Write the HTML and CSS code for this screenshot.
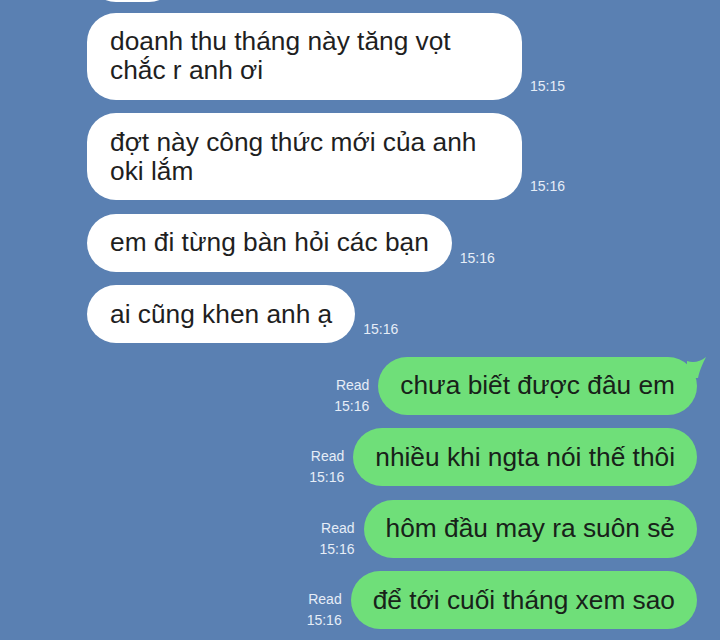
FILE: index.html
```html
<!DOCTYPE html>
<html lang="vi">
<head>
	<meta charset="UTF-8">
	<meta name="viewport" content="width=device-width, initial-scale=1">
	<title>Chat</title>
	<link rel="stylesheet" href="styles.css">
</head>
<body>
<div class="chat">
	<!-- bottom edge of the previous message, scrolled off -->
	<div class="row in prev">
		<div class="bubble stub"></div>
	</div>
	<div class="row in">
		<div class="bubble">doanh thu tháng này tăng vọt chắc r anh ơi</div>
		<div class="time">15:15</div>
	</div>
	<div class="row in">
		<div class="bubble">đợt này công thức mới của anh oki lắm</div>
		<div class="time">15:16</div>
	</div>
	<div class="row in">
		<div class="bubble">em đi từng bàn hỏi các bạn</div>
		<div class="time">15:16</div>
	</div>
	<div class="row in">
		<div class="bubble">ai cũng khen anh ạ</div>
		<div class="time">15:16</div>
	</div>

	<div class="row out">
		<div class="meta">Read<br>15:16</div>
		<div class="bubble first">chưa biết được đâu em
			<svg class="tail" width="20" height="22" viewBox="0 0 20 22"><path d="M0,4 C6,6 13,5 19,0 C16,6 13,12 11,21 L0,21 Z" fill="#6fdf79"/></svg>
		</div>
	</div>
	<div class="row out">
		<div class="meta">Read<br>15:16</div>
		<div class="bubble">nhiều khi ngta nói thế thôi</div>
	</div>
	<div class="row out">
		<div class="meta">Read<br>15:16</div>
		<div class="bubble">hôm đầu may ra suôn sẻ</div>
	</div>
	<div class="row out">
		<div class="meta">Read<br>15:16</div>
		<div class="bubble">để tới cuối tháng xem sao</div>
	</div>
</div>
</body>
</html>
```

FILE: styles.css
```css
html, body {
	margin:0;
	height:100%;
}
body {
	background:#5a80b2;
	font-family:"Liberation Sans", Arial, sans-serif;
	overflow:hidden;
}

.chat {
	display:flex;
	flex-direction:column;
	gap:13.5px;
	padding-top:13px;
}
.chat .prev {
	margin-top:-69px;
	margin-bottom:-3px;
}
.bubble.stub {
	width:91px;
	height:58px;
}

.row {
	display:flex;
	align-items:flex-end;
}
.row.in {
	padding-left:87px;
	gap:8px;
}
.row.out {
	justify-content:flex-end;
	padding-right:23px;
	gap:9px;
}

.bubble {
	position:relative;
	max-width:435px;
	box-sizing:border-box;
	padding:14.5px 23px;
	border-radius:29px;
	background:#fff;
	color:#1f1f1f;
	font-size:26.3px;
	line-height:29px;
}
.out .bubble {
	background:#6fdf79;
	color:#182219;
	padding:14.5px 22px;
}

.tail {
	position:absolute;
	right:-10px;
	top:0;
}

.time {
	color:#e6edf7;
	font-size:14px;
	line-height:20px;
	margin-bottom:4px;
}
.meta {
	color:#e6edf7;
	font-size:14px;
	line-height:21px;
	text-align:right;
	margin-bottom:-2px;
}
```
